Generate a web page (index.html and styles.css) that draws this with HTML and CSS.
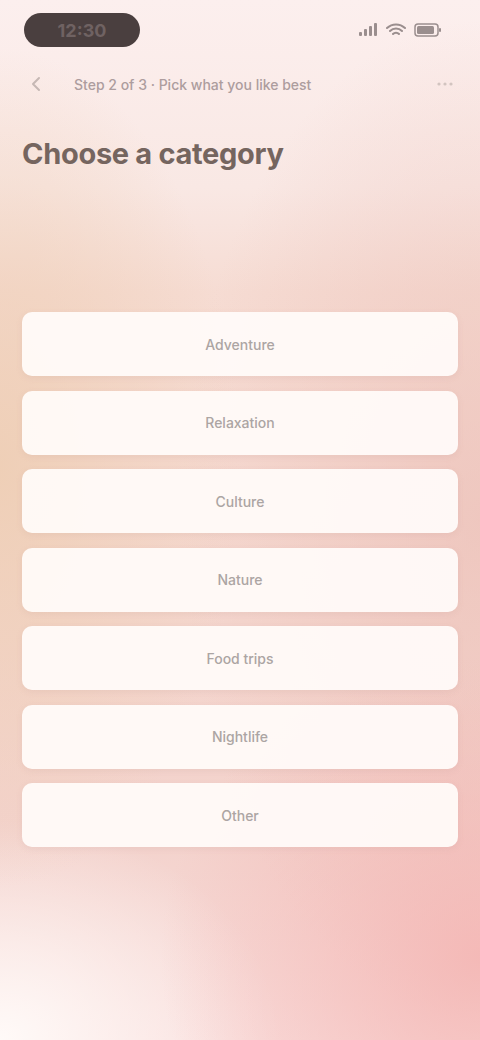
FILE: index.html
```html
<!DOCTYPE html>
<html lang="en">
  <head>
    <meta charset="UTF-8" />
    <meta name="viewport" content="width=device-width, initial-scale=1.0" />
    <title>Choose a category</title>
    <link rel="stylesheet" href="styles.css">
  </head>
  <body>
    <div class="screen">
      <div class="status">
        <div class="time">12:30</div>
        <div class="icons">
          <svg width="20" height="14" viewBox="0 0 20 14"><rect x="1" y="9" width="3" height="4" rx="1" fill="#9a8e8e"/><rect x="6" y="6" width="3" height="7" rx="1" fill="#9a8e8e"/><rect x="11" y="3" width="3" height="10" rx="1" fill="#9a8e8e"/><rect x="16" y="0" width="3" height="13" rx="1" fill="#9a8e8e"/></svg>
          <svg width="20" height="14" viewBox="0 0 20 14"><path d="M1 5a13 13 0 0 1 18 0M4 8a8.5 8.5 0 0 1 12 0M7 11a4 4 0 0 1 6 0" stroke="#9a8e8e" stroke-width="2" fill="none" stroke-linecap="round"/></svg>
          <svg width="28" height="14" viewBox="0 0 28 14"><rect x="1" y="1" width="23" height="12" rx="3" stroke="#9a8e8e" stroke-width="1.5" fill="none"/><rect x="3" y="3" width="17" height="8" rx="1.5" fill="#9a8e8e"/><rect x="25" y="5" width="2" height="4" rx="1" fill="#9a8e8e"/></svg>
        </div>
      </div>

      <div class="nav">
        <svg class="back" width="18" height="18" viewBox="0 0 18 18"><path d="M11 3 5 9l6 6" stroke="#c6b8b4" stroke-width="2" fill="none" stroke-linecap="round" stroke-linejoin="round"/></svg>
        <div class="url">Step 2 of 3 &middot; Pick what you like best</div>
        <svg class="more" width="18" height="18" viewBox="0 0 18 18"><circle cx="3" cy="9" r="1.6" fill="#d2c4c0"/><circle cx="9" cy="9" r="1.6" fill="#d2c4c0"/><circle cx="15" cy="9" r="1.6" fill="#d2c4c0"/></svg>
      </div>

      <h1 class="title">Choose a category</h1>

      <div class="list">
        <button class="item">Adventure</button>
        <button class="item">Relaxation</button>
        <button class="item">Culture</button>
        <button class="item">Nature</button>
        <button class="item">Food trips</button>
        <button class="item">Nightlife</button>
        <button class="item">Other</button>
      </div>
    </div>
  </body>
</html>
```

FILE: styles.css
```css
* {
  box-sizing: border-box;
  margin: 0;
  padding: 0;
}
body {
  width: 480px;
  height: 1040px;
  overflow: hidden;
  font-family: Inter, "Noto Sans", sans-serif;
  background:
    radial-gradient(ellipse 240px 420px at 0% 45%, rgba(238, 206, 180, 0.9), rgba(238, 206, 180, 0) 100%),
    radial-gradient(ellipse 320px 300px at 100% 92%, rgba(244, 182, 180, 0.9), rgba(244, 182, 180, 0) 100%),
    radial-gradient(ellipse 280px 220px at 0% 100%, rgba(255, 250, 248, 1), rgba(255, 250, 248, 0) 100%),
    radial-gradient(ellipse 300px 500px at 100% 50%, rgba(236, 192, 184, 0.7), rgba(236, 192, 184, 0) 100%),
    linear-gradient(180deg, #fcefee 0%, #f9e8e4 18%, #f6dcd3 28%, #f4d6ce 60%, #f3d2cc 80%, #f9dedc 100%);
}
.screen {
  display: flex;
  flex-direction: column;
  padding: 0 22px;
}
.status {
  display: flex;
  justify-content: space-between;
  align-items: center;
  height: 60px;
}
.time {
  background: #4a3f3f;
  color: #6f6262;
  font-weight: 700;
  font-size: 18px;
  border-radius: 18px;
  width: 116px;
  height: 34px;
  display: flex;
  align-items: center;
  justify-content: center;
  margin-left: 2px;
}
.icons {
  display: flex;
  gap: 8px;
  align-items: center;
  margin-right: 16px;
}
.nav {
  display: flex;
  align-items: center;
  height: 44px;
  margin-top: 2px;
}
.back {
  margin-left: 6px;
}
.url {
  flex: 1;
  margin-left: 28px;
  color: #ad9d9e;
  font-size: 14px;
  font-weight: 500;
}
.more {
  margin-right: 4px;
}
.title {
  font-size: 29px;
  font-weight: 700;
  color: #75655f;
  margin-top: 30px;
  letter-spacing: -0.3px;
}
.list {
  display: flex;
  flex-direction: column;
  gap: 14.5px;
  margin-top: 141px;
}
.item {
  height: 64px;
  border: none;
  border-radius: 10px;
  background: rgba(255, 251, 249, 0.94);
  box-shadow: 0 2px 6px rgba(190, 150, 140, 0.16);
  color: #aca5a3;
  font-family: inherit;
  font-size: 14px;
  font-weight: 500;
}
```
